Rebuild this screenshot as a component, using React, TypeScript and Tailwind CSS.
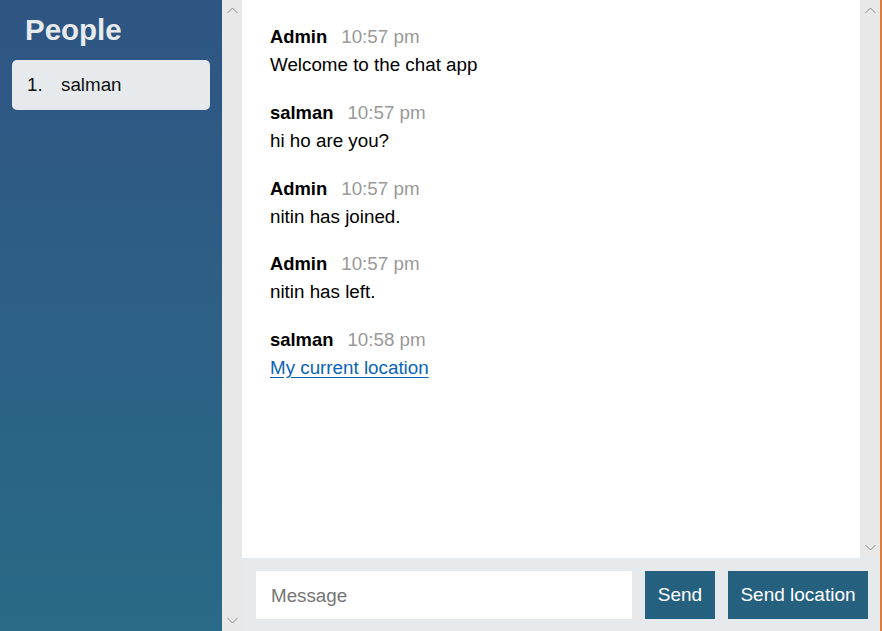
import React from "react";

const Up = () => (
  <svg width="11" height="7" viewBox="0 0 11 7" className="block">
    <polyline points="0.5,6 5.5,1 10.5,6" fill="none" stroke="#8a8a8a" strokeWidth="1" />
  </svg>
);
const Down = () => (
  <svg width="11" height="7" viewBox="0 0 11 7" className="block">
    <polyline points="0.5,1 5.5,6 10.5,1" fill="none" stroke="#8a8a8a" strokeWidth="1" />
  </svg>
);

const Scrollbar = () => (
  <div className="w-[20px] shrink-0 bg-[#e8e8e8] flex flex-col justify-between items-center py-[7px]">
    <Up />
    <Down />
  </div>
);

const messages: { from: string; time: string; text: string; link?: boolean }[] = [
  { from: "Admin", time: "10:57 pm", text: "Welcome to the chat app" },
  { from: "salman", time: "10:57 pm", text: "hi ho are you?" },
  { from: "Admin", time: "10:57 pm", text: "nitin has joined." },
  { from: "Admin", time: "10:57 pm", text: "nitin has left." },
  { from: "salman", time: "10:58 pm", text: "My current location", link: true },
];

export default function App() {
  return (
    <div
      className="flex h-[631px] w-[882px] overflow-hidden"
      style={{ fontFamily: '"Liberation Sans", Arial, sans-serif' }}
    >
      <div className="w-[222px] shrink-0 bg-gradient-to-b from-[#2f5583] to-[#296a86] px-[12px]">
        <h2 className="text-[29.5px] font-bold text-[#e6eaed] leading-[36px] mt-[12px] ml-[13px]">People</h2>
        <ol className="mt-[12px]">
          <li className="h-[50px] rounded-[5px] bg-[#e6eaed] flex items-center text-[18.8px] text-[#111] pl-[15px] pt-[1px]">
            <span className="w-[34px]">1.</span>
            <span>salman</span>
          </li>
        </ol>
      </div>
      <Scrollbar />
      <div className="flex-1 flex flex-col">
        <div className="flex-1 flex min-h-0">
          <div className="flex-1 bg-white pl-[28px] pt-[25px]">
            {messages.map((m, i) => (
              <div key={i} className="mb-[23.75px] text-[18.8px] leading-[24px]">
                <div>
                  <span className="font-bold text-black text-[18.4px]">{m.from}</span>
                  <span className="ml-[14px] text-[#999]">{m.time}</span>
                </div>
                <div className="mt-[4px]">
                  {m.link ? (
                    <a href="#" className="text-[#0b63b8] underline underline-offset-[3px]">
                      {m.text}
                    </a>
                  ) : (
                    <span className="text-black">{m.text}</span>
                  )}
                </div>
              </div>
            ))}
          </div>
          <Scrollbar />
        </div>
        <div className="h-[73px] bg-[#e6eaed] flex items-center pl-[14px] pr-[12px] gap-[13px]">
          <input
            placeholder="Message"
            className="w-[376px] h-[48px] bg-white px-[15px] pt-[2px] text-[18.8px] text-black placeholder:text-[#757575] outline-none"
          />
          <button className="h-[48px] w-[70px] bg-[#26607f] text-white text-[19px] pt-[2px]">Send</button>
          <button className="h-[48px] w-[140px] bg-[#26607f] text-white text-[19px] pt-[2px]">Send location</button>
        </div>
      </div>
      <div className="w-[2px] shrink-0 bg-[#e07b39]" />
    </div>
  );
}
